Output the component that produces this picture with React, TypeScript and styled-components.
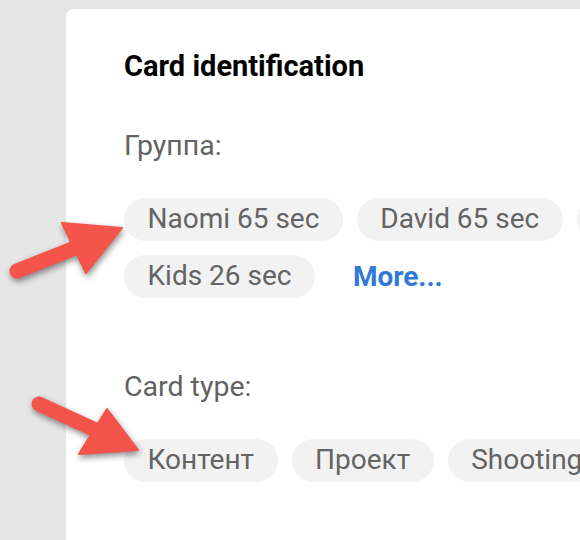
import React from "react";
import styled, { createGlobalStyle } from "styled-components";

const Global = createGlobalStyle`
  html, body { margin: 0; padding: 0; }
  body {
    background: #e6e6e6;
    font-family: Roboto, "Liberation Sans", sans-serif;
    overflow: hidden;
    width: 580px;
    height: 540px;
  }
`;

const Page = styled.div`
  position: relative;
  width: 580px;
  height: 540px;
  overflow: hidden;
  padding: 9px 0 0 66px;
  box-sizing: border-box;
`;

const Card = styled.section`
  background: #ffffff;
  border-top-left-radius: 8px;
  width: 760px;
  height: 600px;
  padding: 40px 0 0 58px;
  box-sizing: border-box;
`;

const Title = styled.h2`
  margin: 0;
  font-size: 29px;
  line-height: 34px;
  font-weight: 700;
  color: #000;
  letter-spacing: 0;
`;

const Label = styled.div<{ $top: number }>`
  margin-top: ${(p) => p.$top}px;
  font-size: 28.5px;
  line-height: 32px;
  color: #626262;
`;

const ChipList = styled.div`
  margin-top: 36px;
  display: flex;
  flex-wrap: wrap;
  gap: 14px;
  width: 680px;
`;

const Chip = styled.span`
  display: inline-block;
  height: 43px;
  line-height: 42px;
  padding: 0 23.5px;
  border-radius: 22px;
  background: #f2f2f2;
  color: #646464;
  font-size: 28px;
  white-space: nowrap;
`;

const More = styled.a`
  display: inline-block;
  height: 43px;
  line-height: 44px;
  padding: 0 24px;
  color: #3079d6;
  font-weight: 700;
  font-size: 28px;
  text-decoration: none;
`;

const Overlay = styled.svg`
  position: absolute;
  left: 0;
  top: 0;
  width: 580px;
  height: 540px;
  pointer-events: none;
  filter: drop-shadow(1px 3px 3px rgba(0, 0, 0, 0.45));
`;

const RED = "#f4544a";

const Arrow: React.FC<{
  tail: [number, number];
  base: [number, number];
  tip: [number, number];
  b1: [number, number];
  b2: [number, number];
}> = ({ tail, base, tip, b1, b2 }) => (
  <g>
    <line
      x1={tail[0]}
      y1={tail[1]}
      x2={base[0]}
      y2={base[1]}
      stroke={RED}
      strokeWidth={15}
      strokeLinecap="round"
    />
    <polygon
      points={`${tip[0]},${tip[1]} ${b1[0]},${b1[1]} ${b2[0]},${b2[1]}`}
      fill={RED}
      stroke={RED}
      strokeWidth={2}
      strokeLinejoin="round"
    />
  </g>
);

export default function App() {
  return (
    <>
      <Global />
      <Page>
        <Card>
          <Title>Card identification</Title>
          <Label $top={47}>Группа:</Label>
          <ChipList>
            <Chip>Naomi 65 sec</Chip>
            <Chip>David 65 sec</Chip>
            <Chip>Miriam 65 sec</Chip>
            <Chip>Kids 26 sec</Chip>
            <More href="#">More...</More>
          </ChipList>
          <Label $top={73}>Card type:</Label>
          <ChipList>
            <Chip>Контент</Chip>
            <Chip>Проект</Chip>
            <Chip>Shooting</Chip>
          </ChipList>
        </Card>
        <Overlay viewBox="0 0 580 540">
          <Arrow
            tail={[17, 271]}
            base={[80, 246]}
            tip={[122, 228]}
            b1={[62, 223]}
            b2={[86, 273]}
          />
          <Arrow
            tail={[39, 404]}
            base={[100, 432]}
            tip={[138, 450]}
            b1={[107, 409]}
            b2={[79, 454]}
          />
        </Overlay>
      </Page>
    </>
  );
}
